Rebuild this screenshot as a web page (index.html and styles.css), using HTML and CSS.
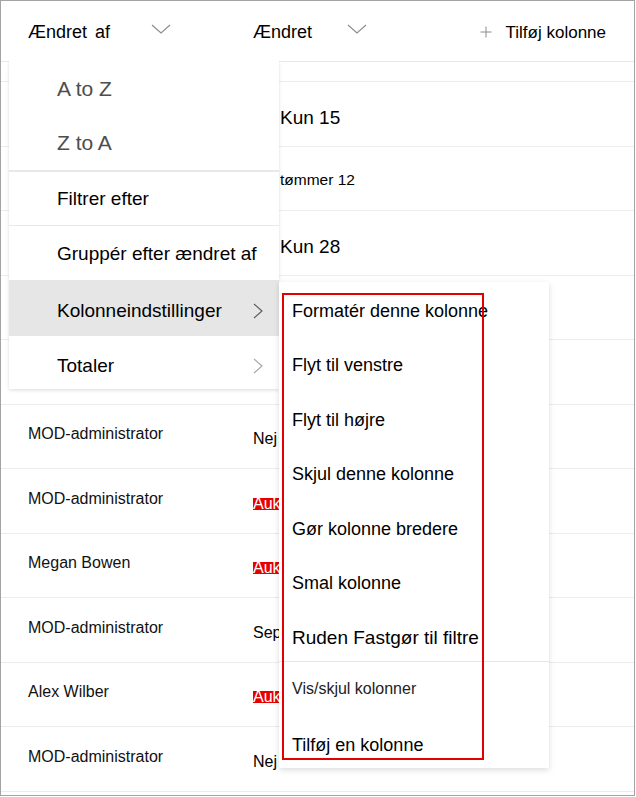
FILE: index.html
```html
<!DOCTYPE html>
<html lang="da">
<head>
<meta charset="utf-8">
<title>Kolonneindstillinger</title>
<link rel="stylesheet" href="styles.css">
</head>
<body>
<div class="frame">
  <div class="header">
    <div class="hcell hcell-1">
      <span class="hlabel hlabel-wide">Ændret af</span>
      <svg class="chev-down" viewBox="0 0 20 10"><polyline points="1,1 10,9 19,1" /></svg>
    </div>
    <div class="hcell hcell-2">
      <span class="hlabel">Ændret</span>
      <svg class="chev-down chev-down-2" viewBox="0 0 20 10"><polyline points="1,1 10,9 19,1" /></svg>
    </div>
    <div class="hadd">
      <svg class="plus" viewBox="0 0 12 12"><line x1="6" y1="0.5" x2="6" y2="11.5" /><line x1="0.5" y1="6" x2="11.5" y2="6" /></svg>
      <span>Tilføj kolonne</span>
    </div>
  </div>
  <div class="spacer"></div>

  <div class="row"><div class="c-name"></div><div class="c-val shift big">Kun 15</div></div>
  <div class="row"><div class="c-name"></div><div class="c-val shift small">tømmer 12</div></div>
  <div class="row"><div class="c-name"></div><div class="c-val shift big">Kun 28</div></div>
  <div class="row"><div class="c-name"></div><div class="c-val"></div></div>
  <div class="row"><div class="c-name"></div><div class="c-val"></div></div>
  <div class="row"><div class="c-name">MOD-administrator</div><div class="c-val"><span class="plain">Nej</span></div></div>
  <div class="row"><div class="c-name">MOD-administrator</div><div class="c-val"><span class="flag">Auk</span></div></div>
  <div class="row"><div class="c-name">Megan Bowen</div><div class="c-val"><span class="flag">Auk</span></div></div>
  <div class="row"><div class="c-name">MOD-administrator</div><div class="c-val"><span class="plain">Sep</span></div></div>
  <div class="row"><div class="c-name">Alex Wilber</div><div class="c-val"><span class="flag">Auk</span></div></div>
  <div class="row"><div class="c-name">MOD-administrator</div><div class="c-val"><span class="plain">Nej</span></div></div>

  <div class="menu menu-main">
    <div class="mi mi-sort">A to Z</div>
    <div class="mi mi-sort">Z to A</div>
    <div class="mdiv2"></div>
    <div class="mi mi-filter">Filtrer efter</div>
    <div class="mdiv"></div>
    <div class="mi mi-group">Gruppér efter ændret af</div>
    <div class="mi mi-active">Kolonneindstillinger
      <svg class="chev-r" viewBox="0 0 10 16"><polyline points="1,1 9,8 1,15" /></svg>
    </div>
    <div class="mi mi-tot">Totaler
      <svg class="chev-r chev-r-light" viewBox="0 0 10 16"><polyline points="1,1 9,8 1,15" /></svg>
    </div>
  </div>

  <div class="menu menu-sub">
    <div class="si">Formatér denne kolonne</div>
    <div class="si">Flyt til venstre</div>
    <div class="si">Flyt til højre</div>
    <div class="si">Skjul denne kolonne</div>
    <div class="si">Gør kolonne bredere</div>
    <div class="si">Smal kolonne</div>
    <div class="si si-pin">Ruden Fastgør til filtre</div>
    <div class="sdiv"></div>
    <div class="si si-vis">Vis/skjul kolonner</div>
    <div class="si si-add">Tilføj en kolonne</div>
    <div class="annot"></div>
  </div>
</div>
</body>
</html>
```
FILE: styles.css
```css
body {
  margin: 0;
  background: #fff;
  font-family: "Liberation Sans", Arial, sans-serif;
}

.frame {
  position: relative;
  width: 635px;
  height: 796px;
  border: 1px solid #a3a3a3;
  box-sizing: border-box;
  overflow: hidden;
  background: #fff;
  color: #000;
}

/* header */
.header {
  height: 61px;
  box-sizing: border-box;
  border-bottom: 1px solid #e8e8e8;
  display: flex;
  align-items: center;
  padding-top: 3px;
}

.hcell {
  display: flex;
  align-items: center;
}

.hcell-1 {
  width: 252px;
  padding-left: 27px;
  box-sizing: border-box;
}

.hlabel {
  font-size: 18px;
  color: #000;
}

.hlabel-wide {
  word-spacing: 3px;
}

.chev-down {
  width: 20px;
  height: 10px;
  margin-left: 41px;
  margin-bottom: 8px;
  fill: none;
  stroke: #8c8c8c;
  stroke-width: 1.1;
}

.chev-down-2 {
  margin-left: 35px;
}

.hadd {
  margin-left: auto;
  padding-right: 28px;
  display: flex;
  align-items: center;
  font-size: 17px;
  color: #000;
}

.plus {
  width: 12px;
  height: 12px;
  margin-right: 14px;
  margin-bottom: 2px;
  stroke: #8c8c8c;
  stroke-width: 1;
}

.spacer {
  height: 20px;
  box-sizing: border-box;
  border-bottom: 1px solid #ececec;
}

/* rows */
.row {
  height: 64.5px;
  box-sizing: border-box;
  border-bottom: 1px solid #ececec;
  display: flex;
}

.c-name {
  width: 252px;
  padding-left: 27px;
  padding-bottom: 4px;
  box-sizing: border-box;
  display: flex;
  align-items: center;
  font-size: 16px;
  color: #111;
}

.c-val {
  flex: 1;
  display: flex;
  align-items: center;
  padding-top: 6px;
  font-size: 16px;
  color: #000;
  white-space: nowrap;
}

.c-val.shift {
  padding-left: 27px;
}

.c-val.big {
  font-size: 19px;
  padding-top: 9px;
}

.c-val.small {
  font-size: 15.5px;
  padding-top: 4px;
}

.plain {
  background: #fff;
}

.flag {
  display: inline-block;
  background: #e60000;
  color: #fff;
  line-height: 12px;
  padding-right: 2px;
}

/* menus */
.menu {
  position: absolute;
  background: #fff;
  box-sizing: border-box;
  box-shadow: 0 1.6px 3.6px rgba(0, 0, 0, 0.13), 0 0.3px 0.9px rgba(0, 0, 0, 0.11);
}

.menu-main {
  left: 8px;
  top: 60px;
  width: 270px;
  height: 328px;
  padding-top: 1px;
}

.mi {
  display: flex;
  align-items: center;
  box-sizing: border-box;
  padding-left: 48px;
  padding-right: 16px;
  font-size: 19px;
  color: #000;
}

.mi-sort {
  height: 54px;
  font-size: 21px;
  color: #4d4d4d;
}

.mdiv2 {
  height: 2px;
  background: #e8e8e8;
}

.mdiv {
  height: 1px;
  background: #e8e8e8;
}

.mi-filter {
  height: 53px;
}

.mi-group {
  height: 54px;
  padding-top: 2px;
}

.mi-active {
  height: 56px;
  padding-top: 6px;
  background: #e6e6e6;
}

.mi-tot {
  height: 53px;
  padding-top: 6px;
}

.chev-r {
  margin-left: auto;
  width: 10px;
  height: 16px;
  fill: none;
  stroke: #5a5a5a;
  stroke-width: 1.1;
}

.chev-r-light {
  stroke: #a6a6a6;
}

.menu-sub {
  left: 278px;
  top: 281px;
  width: 270px;
  height: 486px;
  padding-top: 2px;
  box-shadow: 0 2px 6px rgba(0, 0, 0, 0.14), 0 0.3px 0.9px rgba(0, 0, 0, 0.11);
}

.si {
  height: 54.5px;
  box-sizing: border-box;
  display: flex;
  align-items: center;
  padding-left: 13px;
  font-size: 18px;
  color: #000;
  white-space: nowrap;
}

.si-pin {
  height: 50px;
  padding-top: 3px;
  font-size: 19px;
}

.sdiv {
  height: 1px;
  background: #e6e6e6;
}

.si-vis {
  height: 54px;
  font-size: 16px;
  color: #222;
}

.si-add {
  height: 52px;
  padding-top: 6px;
}

.annot {
  position: absolute;
  left: 3px;
  top: 11px;
  width: 202px;
  height: 467px;
  box-sizing: border-box;
  border: 2px solid #e30000;
}
```
